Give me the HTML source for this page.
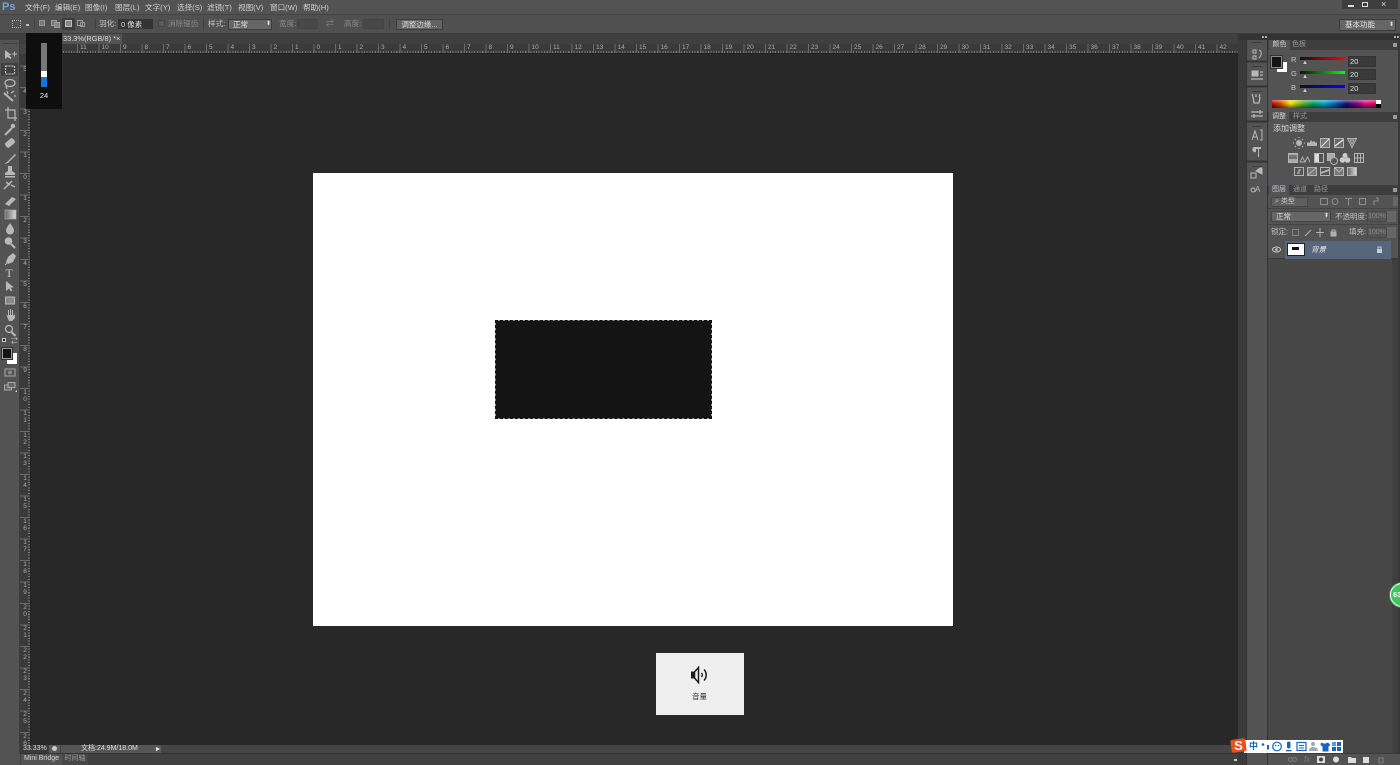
<!DOCTYPE html>
<html lang="zh-CN"><head><meta charset="utf-8"><title>Ps</title>
<style>
html,body{margin:0;padding:0;width:1400px;height:765px;overflow:hidden;background:#282828}
body{position:relative;font-family:"Liberation Sans","Noto Sans CJK SC",sans-serif;font-size:7.5px;color:#c8c8c8;filter:blur(.3px)}
div,span,svg{position:absolute;box-sizing:border-box}
.t{white-space:nowrap;line-height:10px}
.m{top:2.500px;font-size:7.6px;color:#d0d0d0}
.hr{top:0;left:0;display:flex}
.hr b{position:static;display:block;flex:0 0 21.5px;width:21.5px;font:400 6.5px/9px "Liberation Sans",sans-serif;color:#aaa}
.vr b{display:block;height:21.5px;width:8px;font:400 6.5px/7px "Liberation Sans",sans-serif;color:#aaa;text-align:center}
.in{background:#3a3a3a;border:1px solid #333}
.dim{color:#8a8a8a}
svg{overflow:visible}
.ic{fill:none;stroke:#b8b8b8;stroke-width:1.2}
.fl{fill:#b8b8b8;stroke:none}
.tabon{background:#535353;color:#d5d5d5;text-align:center;line-height:10px;font-size:7px}
.taboff{color:#999;text-align:center;line-height:10px;font-size:7px}
.fly{width:4px;height:4px;background:#999}
</style></head><body>

<!-- menu bar -->
<div style="left:0;top:0;width:1400px;height:14px;background:#535353"></div>
<div class="t" style="left:2px;top:1px;font-size:11px;line-height:13px;font-weight:700;color:#6fa6d6">Ps</div>
<div class="t m" style="left:25px">文件(F)</div>
<div class="t m" style="left:55px">编辑(E)</div>
<div class="t m" style="left:85px">图像(I)</div>
<div class="t m" style="left:115px">图层(L)</div>
<div class="t m" style="left:145px">文字(Y)</div>
<div class="t m" style="left:177px">选择(S)</div>
<div class="t m" style="left:207px">滤镜(T)</div>
<div class="t m" style="left:238px">视图(V)</div>
<div class="t m" style="left:270px">窗口(W)</div>
<div class="t m" style="left:303px">帮助(H)</div>
<div style="left:1342px;top:0;width:56px;height:9px;background:#3e3e3e"></div>
<div style="left:1348px;top:5px;width:6px;height:2px;background:#ddd"></div>
<div style="left:1362px;top:2px;width:6px;height:5px;border:1px solid #ddd"></div>
<div class="t" style="left:1381px;top:-1px;font-size:9px;color:#ddd">×</div>

<!-- options bar -->
<div style="left:0;top:14px;width:1400px;height:20px;background:#505050;border-top:1px solid #444;border-bottom:1px solid #3c3c3c"></div>
<div style="left:12px;top:20px;width:9px;height:8px;border:1px dotted #aaa"></div>
<div style="left:26px;top:24px;width:3px;height:2px;background:#bbb"></div>
<div style="left:39px;top:20px;width:6px;height:6px;background:#777;border:1px solid #999"></div>
<div style="left:51px;top:20px;width:6px;height:6px;background:#777;border:1px solid #999"></div>
<div style="left:54px;top:22px;width:6px;height:6px;background:#888;border:1px solid #999"></div>
<div style="left:62px;top:18px;width:13px;height:12px;background:#3d3d3d"></div>
<div style="left:65px;top:20px;width:7px;height:7px;background:#888;border:1px solid #bbb"></div>
<div style="left:77px;top:20px;width:6px;height:6px;border:1px solid #999"></div>
<div style="left:80px;top:22px;width:5px;height:5px;border:1px solid #999"></div>
<div class="t" style="left:99px;top:19px;font-size:7.6px">羽化:</div>
<div class="in t" style="left:118px;top:19px;width:35px;height:10px;color:#ddd;padding-left:2px;line-height:9px;background:#333">0 像素</div>
<div style="left:158px;top:20px;width:7px;height:7px;background:#5a5a5a;border:1px solid #444"></div>
<div class="t dim" style="left:168px;top:19px;font-size:7.6px">消除锯齿</div>
<div class="t" style="left:208px;top:19px;font-size:7.6px">样式:</div>
<div class="t" style="left:228px;top:19px;width:44px;height:11px;background:#666;border:1px solid #3d3d3d;padding-left:4px;line-height:9px;color:#e0e0e0">正常<span style="left:37px;top:0;font-size:6px">⬍</span></div>
<div class="t dim" style="left:279px;top:19px;font-size:7.6px">宽度:</div>
<div style="left:297px;top:19px;width:21px;height:10px;background:#484848;border:1px solid #444"></div>
<div class="t dim" style="left:326px;top:19px;font-size:8px">⇄</div>
<div class="t dim" style="left:344px;top:19px;font-size:7.6px">高度:</div>
<div style="left:363px;top:19px;width:21px;height:10px;background:#484848;border:1px solid #444"></div>
<div class="t" style="left:396px;top:19px;width:47px;height:11px;background:#626262;border:1px solid #3d3d3d;text-align:center;line-height:9px;color:#ddd">调整边缘...</div>
<div style="left:95px;top:18px;width:1px;height:12px;background:#444"></div>
<div style="left:203px;top:18px;width:1px;height:12px;background:#444"></div>
<div style="left:389px;top:18px;width:1px;height:12px;background:#444"></div>
<div style="left:34px;top:18px;width:1px;height:12px;background:#444"></div>
<div class="t" style="left:1339px;top:19px;width:57px;height:12px;background:#666;border:1px solid #3c3c3c;padding-left:5px;line-height:10px;color:#e4e4e4">基本功能<span style="left:49px;top:0;font-size:6px">⬍</span></div>

<!-- tab row -->
<div style="left:20px;top:34px;width:1218px;height:10px;background:#3f3f3f"></div>
<div class="t" style="left:62px;top:34px;width:60px;height:10px;background:#535353;color:#ddd;padding-left:1px;font-size:7.4px">33.3%(RGB/8) *<span style="left:54px;top:0">×</span></div>

<!-- rulers -->
<div style="left:20px;top:44px;width:1218px;height:10px;background:#3a3a3a;overflow:hidden;border-bottom:1px solid #222">
  <div style="left:0;bottom:0;width:100%;height:2px;background:repeating-linear-gradient(90deg,#777 0,#777 1px,transparent 1px,transparent 2.6875px)"></div>
  <div style="left:13.500px;top:0;width:2000px;height:9px;background:repeating-linear-gradient(90deg,#6a6a6a 0,#6a6a6a 1px,transparent 1px,transparent 21.5px)"></div>
  <div class="hr" style="left:60px;top:-1px;width:1300px">
  <b>11</b><b>10</b><b>9</b><b>8</b><b>7</b><b>6</b><b>5</b><b>4</b><b>3</b><b>2</b><b>1</b><b>0</b><b>1</b><b>2</b><b>3</b><b>4</b><b>5</b><b>6</b><b>7</b><b>8</b><b>9</b><b>10</b><b>11</b><b>12</b><b>13</b><b>14</b><b>15</b><b>16</b><b>17</b><b>18</b><b>19</b><b>20</b><b>21</b><b>22</b><b>23</b><b>24</b><b>25</b><b>26</b><b>27</b><b>28</b><b>29</b><b>30</b><b>31</b><b>32</b><b>33</b><b>34</b><b>35</b><b>36</b><b>37</b><b>38</b><b>39</b><b>40</b><b>41</b><b>42</b>
  </div>
</div>
<div style="left:20px;top:44px;width:11px;height:701px;background:#3a3a3a;overflow:hidden;border-right:1px solid #222">
  <div style="right:0;top:0;width:2px;height:100%;background:repeating-linear-gradient(180deg,#777 0,#777 1px,transparent 1px,transparent 2.6875px)"></div>
  <div style="left:0;top:0;width:100%;height:100%;background:repeating-linear-gradient(180deg,#6a6a6a 0,#6a6a6a 1px,transparent 1px,transparent 21.5px)"></div>
  <div class="vr" style="left:1px;top:22px;width:8px">
  <b>5</b><b>4</b><b>3</b><b>2</b><b>1</b><b>0</b><b>1</b><b>2</b><b>3</b><b>4</b><b>5</b><b>6</b><b>7</b><b>8</b><b>9</b><b>1<br>0</b><b>1<br>1</b><b>1<br>2</b><b>1<br>3</b><b>1<br>4</b><b>1<br>5</b><b>1<br>6</b><b>1<br>7</b><b>1<br>8</b><b>1<br>9</b><b>2<br>0</b><b>2<br>1</b><b>2<br>2</b><b>2<br>3</b><b>2<br>4</b><b>2<br>5</b><b>2<br>6</b>
  </div>
</div>
<div style="left:20px;top:44px;width:11px;height:10px;background:#444"></div>

<!-- left toolbar -->
<div style="left:0;top:34px;width:20px;height:731px;background:#535353;border-right:1px solid #3c3c3c"></div>
<div style="left:0;top:34px;width:20px;height:6px;background:#3f3f3f"></div>
<div style="left:3px;top:43px;width:14px;height:1px;background:#3f3f3f"></div>
<div style="left:1px;top:63px;width:17px;height:13px;background:#404040;border-radius:2px"></div>
<svg style="left:0;top:48px" width="20" height="345" viewBox="0 0 20 345">
  <path class="fl" d="M5 2v9l2.500-2 3 2 1-1.500-2.500-2 2.500-.5z"/><path d="M12 6h5M14.500 3.500v5" stroke="#b8b8b8"/>
  <rect class="ic" x="5.500" y="18" width="9" height="8" stroke-dasharray="2 1"/>
  <ellipse class="ic" cx="10" cy="35" rx="5" ry="3.500"/><path class="ic" d="M6 38l1 3"/>
  <path d="M4 45l9 8" stroke="#b8b8b8" stroke-width="2"/><path class="ic" d="M11 45l3-2M14 48h2M8 46l-1-3"/>
  <path class="ic" d="M8 59v11h9M5 62h10v11" stroke-width="1.500"/>
  <path d="M5 87l7-7" stroke="#b8b8b8" stroke-width="2"/><circle class="fl" cx="13" cy="78" r="2.200"/>
  <rect x="5" y="92" width="10" height="6" rx="2" transform="rotate(-40 10 95)" fill="#b8b8b8"/>
  <path d="M4 116l3-2 8-8 1 1-8 8z" fill="#b8b8b8"/>
  <path class="fl" d="M8 118h4v5l3 2v2H5v-2l3-2zM5 128h10v1.500H5z"/>
  <path d="M4 141l8-8M6 134l4 3M11 137l4 2" stroke="#b8b8b8" stroke-width="1.500"/>
  <path d="M5 156l7-7 4 2-7 7z" fill="#b8b8b8"/>
  <rect x="5" y="162" width="11" height="9" fill="url(#g)" stroke="#aaa" stroke-width=".7"/>
  <path class="fl" d="M10 175c2 3 4 5 4 7.500a4 4 0 0 1-8 0c0-2.500 2-4.500 4-7.500z"/>
  <circle class="fl" cx="8.500" cy="193" r="3.800"/><path d="M11 196l4 4" stroke="#b8b8b8" stroke-width="2"/>
  <path class="fl" d="M13 205l3 3-3 6-5 2-2-2 2-5z"/><path d="M5 217l3-3" stroke="#b8b8b8"/>
  <text x="5.500" y="229" fill="#c8c8c8" font-family="Liberation Serif" font-size="12">T</text>
  <path class="fl" d="M6 233v10l3-2.500 2 3 1.500-1-2-3h3.500z"/>
  <rect x="5.500" y="249" width="9" height="7" fill="#888" stroke="#b8b8b8"/>
  <path class="fl" d="M6 266l2 2v-6h1v5h1v-6h1v6h1v-5h1v6l2-2v4l-3 3H9z"/>
  <circle class="ic" cx="9" cy="281" r="3.500"/><path d="M11.500 284l4 4" stroke="#b8b8b8" stroke-width="2"/>
  <rect x="5" y="321" width="10" height="7" fill="none" stroke="#a8a8a8"/><circle cx="10" cy="324.500" r="2" fill="#888"/>
  <rect x="4.500" y="337" width="7" height="5" fill="#666" stroke="#aaa"/><rect x="8" y="334.500" width="7" height="5" fill="#666" stroke="#aaa"/>
  <path d="M15 344h2v-2z" fill="#ddd"/>
  <defs><linearGradient id="g"><stop offset="0" stop-color="#666"/><stop offset="1" stop-color="#ddd"/></linearGradient></defs>
</svg>
<div style="left:2px;top:338px;width:4px;height:4px;background:#222;border:1px solid #ccc"></div>
<div class="t" style="left:11px;top:337px;font-size:7px">⇄</div>
<div style="left:7px;top:353px;width:10px;height:11px;background:#fff"></div>
<div style="left:2px;top:348px;width:10px;height:11px;background:#141414;border:1px solid #999;outline:1px solid #333"></div>

<!-- canvas -->
<div style="left:31px;top:54px;width:1207px;height:691px;background:#282828"></div>
<div style="left:313px;top:173px;width:640px;height:453px;background:#fff"></div>
<div style="left:495px;top:320px;width:216.500px;height:98.500px;background:#999"></div>
<div style="left:495px;top:320px;width:216.500px;height:98.500px;background:#141414;background-clip:padding-box;border:1.500px dashed #111"></div>

<!-- volume HUD -->
<div style="left:26px;top:33px;width:36px;height:76px;background:#0e0e0e"></div>
<div style="left:41px;top:43px;width:6px;height:28px;background:#777"></div>
<div style="left:41px;top:71px;width:6px;height:6px;background:#fff"></div>
<div style="left:41px;top:77px;width:6px;height:10px;background:#0f78d8"></div>
<div class="t" style="left:26px;top:91px;width:36px;text-align:center;font-size:7.5px;color:#e8e8e8">24</div>

<!-- volume card -->
<div style="left:656px;top:653px;width:87.500px;height:61.500px;background:#efefef"></div>
<svg style="left:690px;top:666px" width="19" height="18" viewBox="0 0 19 18" fill="none" stroke="#1c1c1c">
  <path d="M1.500 6h2v6h-2z" fill="#1c1c1c" stroke-width="1"/>
  <path d="M4.500 6l4-4.500v15l-4-4.500z" stroke-width="1.500"/>
  <path d="M11.500 7a3 3 0 0 1 0 4" stroke-width="1.400"/>
  <path d="M14 3.500a8 8 0 0 1 0 11" stroke-width="1.500"/>
</svg>
<div class="t" style="left:656px;top:692px;width:87px;text-align:center;font-size:7.5px;color:#333">音量</div>

<!-- status bar -->
<div style="left:20px;top:745px;width:1218px;height:8px;background:#454545"></div>
<div style="left:20px;top:745px;width:29px;height:8px;background:#3a3a3a"></div>
<div class="t" style="left:23px;top:744px;font-size:7px;color:#ddd">33.33%</div>
<div style="left:49px;top:745px;width:11px;height:8px;background:#5a5a5a"></div>
<div style="left:52px;top:746px;width:5px;height:5px;border-radius:50%;background:#ccc"></div>
<div style="left:61px;top:745px;width:92px;height:8px;background:#555"></div>
<div class="t" style="left:81px;top:744px;font-size:7px;color:#ddd">文档:24.9M/18.0M</div>
<div style="left:153px;top:745px;width:8px;height:8px;background:#5a5a5a"></div>
<div style="left:156px;top:747px;width:0;height:0;border-left:4px solid #eee;border-top:2.500px solid transparent;border-bottom:2.500px solid transparent"></div>
<div style="left:0;top:753px;width:1268px;height:12px;background:#404040;border-top:1px solid #333"></div>
<div style="left:0;top:753px;width:20px;height:12px;background:#535353"></div>
<div class="t" style="left:21px;top:754px;width:41px;height:11px;background:#535353;text-align:center;font-size:7px;color:#d8d8d8">Mini Bridge</div>
<div class="t" style="left:62px;top:754px;width:26px;height:11px;background:#484848;text-align:center;font-size:7px;color:#999">时间轴</div>
<div style="left:1234px;top:759px;width:3px;height:2px;background:#ccc"></div>
<div style="left:1238px;top:758px;width:5px;height:4px;background:#777"></div>

<!-- right columns -->
<div style="left:1238px;top:34px;width:8px;height:731px;background:#3a3a3a"></div>
<div style="left:1246px;top:40px;width:22px;height:725px;background:#535353;border-left:1px solid #333;border-right:1px solid #333"></div>
<div style="left:1268px;top:40px;width:130px;height:725px;background:#474747"></div>
<div style="left:1392px;top:259px;width:6px;height:494px;background:#3f3f3f"></div>
<div style="left:1398px;top:40px;width:2px;height:725px;background:#383838"></div>
<div style="left:1238px;top:34px;width:162px;height:6px;background:#333"></div>
<div style="left:1262px;top:36px;width:2px;height:2px;background:#aaa"></div>
<div style="left:1265px;top:36px;width:2px;height:2px;background:#aaa"></div>
<div style="left:1394px;top:36px;width:2px;height:2px;background:#aaa"></div>
<div style="left:1397px;top:36px;width:2px;height:2px;background:#aaa"></div>
<!-- dock icons -->
<svg style="left:1246px;top:40px" width="22" height="160" viewBox="0 0 22 160">
  <g fill="none" stroke="#b8b8b8">
    <path d="M0 21.500h22M0 46.500h22M0 81.500h22M0 121.500h22" stroke="#333" stroke-width="2"/>
    <path d="M6 2.500h10M6 26.500h10M6 51.500h10M6 86.500h10M6 126.500h10" stroke="#3c3c3c"/>
    <path d="M7 10h3v3H7zM7 16h3v3H7zM13 10c3 1 3 5 0 8"/>
    <rect x="6" y="31" width="6" height="5" fill="#b8b8b8"/><path d="M5 39h12M14 32h3M14 35h3" stroke-width="1.300"/>
    <path d="M7 57l1 6h5l1-6M10 57v-3M13 57l1-3M7 57l-1-3" stroke-width="1.200"/>
    <path d="M5 72h12M5 76h12M14 70v4M8 74v4" stroke-width="1.200"/>
    <path d="M14 90h2v10h-2M6 100l3-9 3 9M7 97h4"/>
    <path d="M8 107h7v2h-2v8h-1v-8h-2v3a2.500 2.500 0 0 1-2-5z" fill="#b8b8b8" stroke="none"/>
    <rect x="5" y="133" width="5" height="5"/><path d="M10 131l4-3h2v6z" fill="#b8b8b8"/>
  </g>
  <text x="9" y="152" fill="#b8b8b8" font-size="8" font-family="Liberation Sans">A</text>
  <circle cx="7" cy="150" r="2" fill="none" stroke="#b8b8b8"/>
</svg>

<!-- colour panel -->
<div style="left:1268px;top:40px;width:130px;height:10px;background:#3e3e3e"></div>
<div class="tabon" style="left:1269px;top:40px;width:21px">颜色</div>
<div class="taboff" style="left:1290px;top:40px;width:18px">色板</div>
<div class="fly" style="left:1393px;top:43px"></div>
<div style="left:1268px;top:50px;width:130px;height:62px;background:#535353"></div>
<div style="left:1277px;top:62px;width:10px;height:10px;background:#fff"></div>
<div style="left:1271px;top:56px;width:11px;height:12px;background:#141414;border:1px solid #888;outline:1px solid #333"></div>
<div class="t" style="left:1291px;top:55px">R</div><div class="t" style="left:1291px;top:69px">G</div><div class="t" style="left:1291px;top:83px">B</div>
<div style="left:1300px;top:57px;width:45px;height:3px;background:linear-gradient(90deg,#111,#f00)"></div>
<div style="left:1300px;top:71px;width:45px;height:3px;background:linear-gradient(90deg,#111,#0f0)"></div>
<div style="left:1300px;top:85px;width:45px;height:3px;background:linear-gradient(90deg,#111,#00f)"></div>
<div class="t" style="left:1302px;top:58px;font-size:6px;color:#ccc">▲</div>
<div class="t" style="left:1302px;top:72px;font-size:6px;color:#ccc">▲</div>
<div class="t" style="left:1302px;top:86px;font-size:6px;color:#ccc">▲</div>
<div class="t in" style="left:1348px;top:56px;width:28px;height:11px;padding-left:1px;line-height:9px;color:#ddd">20</div>
<div class="t in" style="left:1348px;top:69px;width:28px;height:11px;padding-left:1px;line-height:9px;color:#ddd">20</div>
<div class="t in" style="left:1348px;top:83px;width:28px;height:11px;padding-left:1px;line-height:9px;color:#ddd">20</div>
<div style="left:1272px;top:100px;width:109px;height:8px;background:linear-gradient(90deg,#c00000 0,#d24a00 8%,#f5e400 17%,#60b020 28%,#00a060 38%,#00a0d0 48%,#0060b0 58%,#101070 68%,#800080 78%,#e0108c 86%,#d00020 100%)"></div>
<div style="left:1272px;top:100px;width:104px;height:8px;background:linear-gradient(180deg,rgba(255,255,255,.45),rgba(0,0,0,0) 45%,rgba(0,0,0,.55))"></div>
<div style="left:1376px;top:100px;width:5px;height:4px;background:#fff"></div>
<div style="left:1376px;top:104px;width:5px;height:4px;background:#000"></div>

<!-- adjustments panel -->
<div style="left:1268px;top:112px;width:130px;height:10px;background:#3e3e3e"></div>
<div class="tabon" style="left:1269px;top:112px;width:20px">调整</div>
<div class="taboff" style="left:1289px;top:112px;width:22px">样式</div>
<div class="fly" style="left:1393px;top:115px"></div>
<div style="left:1268px;top:122px;width:130px;height:63px;background:#535353"></div>
<div class="t" style="left:1273px;top:124px;font-size:8px;color:#dcdcdc">添加调整</div>
<svg style="left:1268px;top:135px" width="110" height="50" viewBox="0 0 110 50" fill="none" stroke="#b4b4b4">
  <circle cx="31" cy="8" r="2.500" fill="#b4b4b4"/><path d="M31 3v-1M31 14v-1M25 8h1M36 8h1M27 4l1 1M34 11l1 1M27 12l1-1M34 5l1-1" stroke-width="1.200"/>
  <path d="M39 11V8l1.500-1 1 1 1.500-3 1.500 2 1.500-1 1 1 1 1 1-1V11z" fill="#b4b4b4" stroke="none"/>
  <rect x="52.500" y="3.500" width="9" height="9" fill="#777"/><path d="M53 12l8-8" stroke="#e4e4e4"/>
  <rect x="66.500" y="3.500" width="9" height="9" fill="#6a6a6a"/><path d="M67 11l8-6" stroke="#eee" stroke-width="1.200"/>
  <path d="M79.500 3.500h9l-4.500 9zM82 5h4l-2 4z" stroke-width="1"/>
  <rect x="20.500" y="18.500" width="9" height="9" fill="#aaa"/><path d="M21 23h8" stroke="#333"/><path d="M21 21h8" stroke="#444"/>
  <path d="M32 27l2.500-5 2.500 5zM37 27l2.500-5 2.500 5M37 20.500h0" stroke-width=".9"/>
  <rect x="46.500" y="18.500" width="9" height="9"/><rect x="47" y="19" width="4" height="8" fill="#ddd" stroke="none"/>
  <rect x="59.500" y="18.500" width="7" height="7" fill="#aaa"/><circle cx="66" cy="26" r="3.500" fill="#555"/>
  <circle cx="77" cy="20.500" r="2.500" fill="#ccc" stroke="none"/><circle cx="74.500" cy="25" r="2.800" fill="#ccc" stroke="none"/><circle cx="79.500" cy="25" r="2.800" fill="#ccc" stroke="none"/>
  <path d="M86.500 18.500h9v9h-9zM89.500 18.500v9M92.500 18.500v9M86.500 23h9"/>
  <rect x="26.500" y="32.500" width="9" height="8"/><path d="M29 38h2v-3h2" stroke-width="1.200"/>
  <rect x="39.500" y="32.500" width="9" height="8" fill="#777"/><path d="M40 40l8-7"/>
  <rect x="52.500" y="32.500" width="9" height="8"/><path d="M53 38l8-3" stroke-width="2"/>
  <rect x="66.500" y="32.500" width="9" height="8" fill="#777"/><path d="M67 33l4 4 4-4"/>
  <rect x="79.500" y="32.500" width="9" height="8" fill="url(#g)"/>
</svg>

<!-- layers panel -->
<div style="left:1268px;top:185px;width:130px;height:10px;background:#3e3e3e"></div>
<div class="tabon" style="left:1269px;top:185px;width:20px;color:#b8c8d8">图层</div>
<div class="taboff" style="left:1290px;top:185px;width:20px">通道</div>
<div class="taboff" style="left:1311px;top:185px;width:20px">路径</div>
<div class="fly" style="left:1393px;top:188px"></div>
<div style="left:1268px;top:195px;width:130px;height:47px;background:#535353"></div>
<div style="left:1268px;top:208px;width:130px;height:1px;background:#444"></div>
<div style="left:1268px;top:224px;width:130px;height:1px;background:#444"></div>
<div class="t" style="left:1271px;top:197px;width:37px;height:10px;background:#5f5f5f;border:1px solid #464646;padding-left:3px;line-height:8px;font-size:7px">⌕ 类型</div>
<svg style="left:1318px;top:196px" width="70" height="11" viewBox="0 0 70 11" fill="none" stroke="#8e8e8e"><rect x="2.500" y="2.500" width="7" height="6"/><circle cx="17" cy="5.500" r="3"/><path d="M27 2.500h7M30.500 2.500v7"/><rect x="41.500" y="2.500" width="6" height="6"/><path d="M56 9V5h4V2h-2"/></svg>
<div style="left:1393px;top:197px;width:5px;height:9px;background:#666"></div>
<div class="t" style="left:1271px;top:211px;width:60px;height:11px;background:#666;border:1px solid #464646;padding-left:4px;line-height:9px;color:#ddd">正常<span style="left:52px;top:0;font-size:6px">⬍</span></div>
<div class="t" style="left:1335px;top:212px;color:#c0c0c0">不透明度:</div>
<div class="t dim" style="left:1367px;top:211px;width:20px;height:11px;background:#555;border:1px solid #4a4a4a;line-height:9px;font-size:7px">100%</div>
<div style="left:1387px;top:211px;width:9px;height:11px;background:#666"></div>
<div class="t" style="left:1271px;top:227px;color:#c0c0c0">锁定:</div>
<svg style="left:1291px;top:227px" width="50" height="11" viewBox="0 0 50 11" fill="none" stroke="#b0b0b0"><rect x="1.500" y="2.500" width="6" height="6" stroke-dasharray="1 1"/><path d="M14 9l6-6"/><path d="M29 1v9M25 5.500h8"/><rect x="40" y="5" width="5" height="4" fill="#b0b0b0"/><path d="M41 5V3h3v2"/></svg>
<div class="t" style="left:1349px;top:227px;color:#c0c0c0">填充:</div>
<div class="t dim" style="left:1367px;top:227px;width:20px;height:11px;background:#555;border:1px solid #4a4a4a;line-height:9px;font-size:7px">100%</div>
<div style="left:1387px;top:227px;width:9px;height:11px;background:#666"></div>
<div style="left:1268px;top:241px;width:130px;height:18px;background:#535353;border-bottom:1px solid #3a3a3a"></div>
<div style="left:1285px;top:241px;width:106px;height:18px;background:#56667d"></div>
<svg style="left:1272px;top:246px" width="9" height="7" viewBox="0 0 9 7"><ellipse cx="4.500" cy="3.500" rx="4" ry="2.500" fill="none" stroke="#ccc"/><circle cx="4.500" cy="3.500" r="1.300" fill="#ccc"/></svg>
<div style="left:1287px;top:243px;width:18px;height:13px;background:#fff;border:1px solid #222"></div>
<div style="left:1292px;top:247px;width:7px;height:3px;background:#111"></div>
<div class="t" style="left:1311px;top:245px;font-style:italic;color:#e6e6e6">背景</div>
<svg style="left:1376px;top:245px" width="7" height="9" viewBox="0 0 7 9"><rect x="1" y="4" width="5" height="4" fill="#ccc"/><path d="M2 4V2h3v2" fill="none" stroke="#ccc"/></svg>

<!-- layer panel footer -->
<div style="left:1268px;top:753px;width:132px;height:12px;background:#535353;border-top:1px solid #3a3a3a"></div>
<svg style="left:1288px;top:755px" width="100" height="10" viewBox="0 0 100 10" fill="none" stroke="#7c7c7c">
  <circle cx="2.500" cy="4.500" r="2"/><circle cx="6.500" cy="4.500" r="2"/>
  <rect x="29" y="1" width="8" height="7" fill="#ddd" stroke="none"/><circle cx="33" cy="4.500" r="2" fill="#444" stroke="none"/>
  <circle cx="48" cy="4.500" r="3" fill="#ddd" stroke="none"/>
  <path d="M60 2h3l1 1h4v5h-8z" fill="#ddd" stroke="none"/>
  <path d="M75 2h6v6h-6z" fill="#ddd" stroke="none"/>
  <path d="M90 3h6M91 3v5h4V3"/>
</svg>
<div class="t dim" style="left:1304px;top:755px;font-style:italic;font-size:8px;color:#7c7c7c;line-height:9px">fx</div>

<!-- green badge -->
<div style="left:1390px;top:583px;width:24px;height:24px;border-radius:50%;background:#3cc65c;border:1px solid #fff;box-shadow:0 0 0 1px #2e9c48"></div>
<div class="t" style="left:1393px;top:590px;font-size:7.500px;font-weight:700;color:#fff">63</div>

<!-- sogou bar -->
<div style="left:1244px;top:740px;width:99px;height:13px;background:#fff"></div>
<div style="left:1231px;top:739px;width:15px;height:13px;background:#e8501c;border-radius:2px;transform:rotate(-8deg)"></div>
<div class="t" style="left:1231px;top:739px;width:15px;text-align:center;font-size:13px;line-height:13px;font-weight:700;color:#fff">S</div>
<div class="t" style="left:1249px;top:741px;font-size:9px;font-weight:700;line-height:11px;color:#1565c0">中</div>
<svg style="left:1260px;top:740px" width="83" height="13" viewBox="0 0 83 13">
  <g fill="#1565c0">
    <circle cx="3" cy="4.500" r="1.300"/><path d="M7 5h2v4l-2 1z"/>
    <circle cx="17" cy="6.500" r="4.300" fill="none" stroke="#1565c0" stroke-width="1.200"/><circle cx="15.500" cy="5.500" r=".8"/><circle cx="18.500" cy="5.500" r=".8"/>
    <rect x="27" y="1.500" width="3.500" height="7" rx="1.700"/><rect x="26" y="10" width="5.500" height="1.300"/>
    <rect x="37" y="2.500" width="9" height="8" fill="none" stroke="#1565c0" stroke-width="1.200"/><rect x="39" y="5" width="5" height="1"/><rect x="39" y="7.500" width="5" height="1"/>
    <circle cx="53" cy="4" r="2" fill="#9ab"/><path d="M49 11c0-3 2-4 4-4s5 1 5 4z" fill="#9ab"/>
    <path d="M61 2.500l2.500 1h2l2.500-1 2.500 2.500-2 1.500v5h-6v-5l-2-1.500z"/>
    <rect x="77" y="2" width="4" height="4"/><rect x="77" y="7" width="4" height="4"/><rect x="72" y="7" width="4" height="4"/><rect x="72" y="2" width="4" height="4" fill="#5a9ad8"/>
  </g>
</svg>
</body></html>
